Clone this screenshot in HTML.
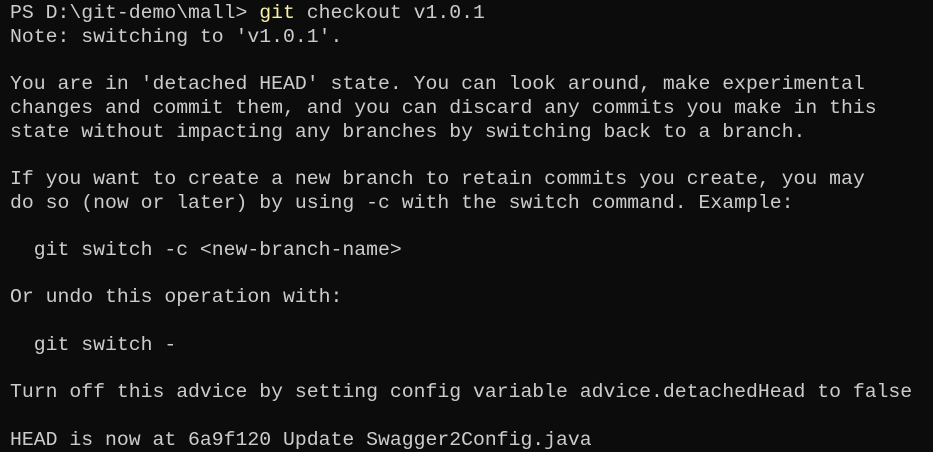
<!DOCTYPE html>
<html><head><meta charset="utf-8"><style>
html,body{margin:0;padding:0;background:#0c0c0c;width:933px;height:450px;overflow:hidden}
pre{margin:0;position:absolute;left:10px;top:2px;font-family:"Liberation Mono","DejaVu Sans Mono",monospace;font-size:19.8px;line-height:23.7px;color:#cccccc;white-space:pre}
.y{color:#f9f1a5}
</style></head><body><pre>PS D:\git-demo\mall&gt; <span class="y">git</span> checkout v1.0.1
Note: switching to 'v1.0.1'.

You are in 'detached HEAD' state. You can look around, make experimental
changes and commit them, and you can discard any commits you make in this
state without impacting any branches by switching back to a branch.

If you want to create a new branch to retain commits you create, you may
do so (now or later) by using -c with the switch command. Example:

  git switch -c &lt;new-branch-name&gt;

Or undo this operation with:

  git switch -

Turn off this advice by setting config variable advice.detachedHead to false

HEAD is now at 6a9f120 Update Swagger2Config.java</pre></body></html>
